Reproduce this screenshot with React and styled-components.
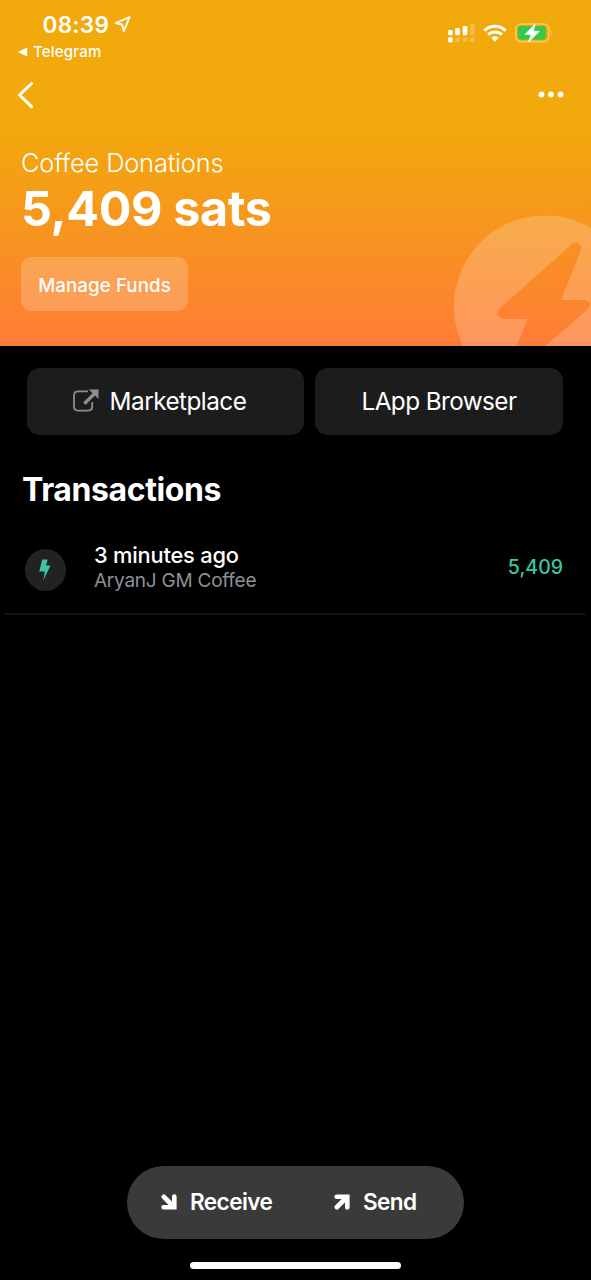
import React from "react";
import styled, { createGlobalStyle } from "styled-components";

const GlobalStyle = createGlobalStyle`
  * { box-sizing: border-box; }
  html, body { margin: 0; background: #000; }
  button { border: 0; padding: 0; margin: 0; background: none; color: inherit; font: inherit; letter-spacing: inherit; }
  h1, h2, p, ul { margin: 0; padding: 0; list-style: none; }
  svg { display: block; flex: none; }
`;

const Screen = styled.main`
  width: 591px;
  height: 1280px;
  display: flex;
  flex-direction: column;
  overflow: hidden;
  background: #000;
  color: #fff;
  font-family: Inter, "Liberation Sans", sans-serif;
`;

const Hero = styled.header`
  position: relative;
  flex: none;
  height: 346px;
  overflow: hidden;
  background: linear-gradient(180deg, #f2a90b 0, #f2a90b 120px, #f69a1b 205px, #fa8c27 270px, #ff7c38 346px);
`;

const Label = styled.span`
  display: block;
  white-space: nowrap;
  font-size: ${(p) => p.$size}px;
  line-height: ${(p) => p.$line}px;
  font-weight: ${(p) => p.$weight || 400};
  letter-spacing: ${(p) => p.$track || 0}px;
  color: ${(p) => p.$color || "inherit"};
`;

const StatusBar = styled.div`
  display: flex;
  justify-content: space-between;
  height: 68px;
  padding: 11px 38px 0 17px;
`;

const Clock = styled.div`
  display: flex;
  align-items: center;
  gap: 5px;
  padding-left: 25.5px;
  height: 27px;
`;

const BackToApp = styled.div`
  display: flex;
  align-items: center;
  gap: 5px;
  margin-top: 4px;
  height: 20px;
`;

const Indicators = styled.div`
  display: flex;
  align-items: center;
  gap: 8px;
  height: 24px;
  margin-top: 10px;
`;

const NavBar = styled.nav`
  display: flex;
  align-items: center;
  justify-content: space-between;
  height: 54px;
  padding: 0 27px 0 17px;
`;

const Balance = styled.section`
  padding: 26px 21px 0;
`;

const ManageButton = styled.button`
  display: flex;
  align-items: center;
  justify-content: center;
  width: 167px;
  height: 54px;
  margin-top: 18px;
  padding-top: 3px;
  border-radius: 11px;
  background: rgba(255, 255, 255, 0.2);
`;

const Watermark = styled.svg`
  position: absolute;
  left: 454px;
  top: 215px;
`;

const Actions = styled.div`
  display: grid;
  grid-template-columns: 277px 248px;
  gap: 11px;
  padding: 22px 0 0 27px;
`;

const ActionButton = styled.button`
  display: flex;
  align-items: center;
  justify-content: center;
  gap: 11px;
  height: 67px;
  padding-right: ${(p) => p.$inset || 0}px;
  padding-bottom: 1px;
  border-radius: 13px;
  background: #1c1c1c;
`;

const SectionTitle = styled.h2`
  padding: 35px 0 0 22px;
`;

const TransactionRow = styled.li`
  display: flex;
  align-items: flex-start;
  height: 87px;
  margin: 18px 5px 0;
  padding: 14px 23px 0 19.5px;
  border-bottom: 2px solid #111;
`;

const Badge = styled.div`
  display: flex;
  align-items: center;
  justify-content: center;
  width: 41px;
  height: 42px;
  margin: 7px 28.5px 0 0;
  border-radius: 50%;
  background: #222;
`;

const Details = styled.div`
  flex: 1;
  padding-top: 1px;
`;

const Amount = styled.div`
  padding-top: 13px;
`;

const Footer = styled.footer`
  display: flex;
  flex-direction: column;
  align-items: center;
  margin-top: auto;
  padding-bottom: 11px;
`;

const TransferPill = styled.div`
  display: flex;
  align-items: center;
  width: 337px;
  height: 73px;
  padding: 0 0 1px 34px;
  border-radius: 37px;
  background: #3a3a3b;
`;

const TransferButton = styled.button`
  display: flex;
  align-items: center;
  gap: 13px;
  width: ${(p) => p.$width}px;
`;

const HomeIndicator = styled.div`
  width: 211px;
  height: 7px;
  margin-top: 23px;
  border-radius: 4px;
  background: #fff;
`;

const LocationIcon = () => (
  <svg width="17" height="17" viewBox="0 0 17 17" fill="none" stroke="#fff" strokeWidth="1.8" strokeLinejoin="round">
    <path d="M15.6 1.2 1.6 7 8 8.5 9.8 15.2Z" />
  </svg>
);

const SignalIcon = () => (
  <svg width="27" height="20" viewBox="0 0 27 20" fill="#fff">
    <rect x="0" y="7" width="4.7" height="5.3" rx="1.2" />
    <rect x="7.2" y="5" width="4.7" height="7.3" rx="1.2" />
    <rect x="14.7" y="3" width="4.7" height="9.3" rx="1.2" />
    <rect x="22.1" y="0.5" width="4.5" height="11.8" rx="1.2" opacity="0.25" />
    <rect x="0" y="14.3" width="4.7" height="5.2" rx="1.4" />
    <g opacity="0.25">
      <rect x="7.2" y="14.5" width="4.7" height="4.6" rx="1.2" />
      <rect x="14.7" y="14.5" width="4.7" height="4.6" rx="1.2" />
      <rect x="22.1" y="14.5" width="4.5" height="4.6" rx="1.2" />
    </g>
  </svg>
);

const WifiIcon = () => (
  <svg width="24" height="18" viewBox="0 0 24 18">
    <g fill="none" stroke="#fff" strokeWidth="3">
      <path d="M1.3 6.7A15.3 15.3 0 0 1 22.7 6.7" />
      <path d="M5.1 10.7A9.9 9.9 0 0 1 18.9 10.7" />
    </g>
    <path d="M12 17.7 8.2 13.8A5.5 5.5 0 0 1 15.8 13.8Z" fill="#fff" />
  </svg>
);

const BatteryIcon = () => (
  <svg width="38" height="20" viewBox="0 0 38 20">
    <rect x="0.9" y="1" width="33" height="17.6" rx="5" fill="none" stroke="#f6cb60" strokeWidth="1.6" />
    <rect x="2.8" y="2.9" width="28" height="13.8" rx="3" fill="#35c94b" />
    <path d="M35.8 7.2C37.6 8 37.6 11.6 35.8 12.4Z" fill="#f6cb60" />
    <path d="M20.4 .8 10.2 11.3H16.3L13.6 19 24.2 8.3H18.1Z" fill="#fff" stroke="#fff" strokeWidth=".9" strokeLinejoin="round" />
  </svg>
);

const ExternalIcon = () => (
  <svg width="26" height="24" viewBox="0 0 26 24">
    <path d="M15 2.4H5Q1 2.4 1 6.4V17.6Q1 21.6 5 21.6H15Q19.2 21.6 19.2 17.6V13" fill="none" stroke="#8c8f91" strokeWidth="1.8" />
    <path d="M11.3 14.8 22 4.1" stroke="#8c8f91" strokeWidth="3.4" />
    <path d="M15.6 .4H25.5V10.1L22.2 6.8 18.8 3.5Z" fill="#8c8f91" />
  </svg>
);

const ArrowIcon = ({ down }) => (
  <svg width="16" height="16" viewBox="0 0 16 16" fill="none" stroke="#fff" strokeLinecap="round">
    <g transform={down ? "matrix(1 0 0 -1 0 16)" : undefined}>
      <path d="M2.6 2.7H13.3V13.4" strokeWidth="4.6" />
      <path d="M2.9 13.1 12 4" strokeWidth="4.8" />
    </g>
  </svg>
);

export default function App() {
  return (
    <>
      <GlobalStyle />
      <Screen>
        <Hero>
          <StatusBar>
            <div>
              <Clock>
                <Label $size={22.5} $line={27} $weight={600} $track={0.3}>08:39</Label>
                <LocationIcon />
              </Clock>
              <BackToApp>
                <svg width="11" height="10" viewBox="0 0 11 10"><path d="M.8 5 10.2.6V9.4Z" fill="#fff" /></svg>
                <Label $size={15} $line={20} $weight={500} $track={0.2}>Telegram</Label>
              </BackToApp>
            </div>
            <Indicators>
              <SignalIcon />
              <WifiIcon />
              <BatteryIcon />
            </Indicators>
          </StatusBar>
          <NavBar>
            <svg width="18" height="28" viewBox="0 0 18 28" fill="none" stroke="#fff" strokeWidth="3" strokeLinecap="round" strokeLinejoin="round">
              <path d="M14.6 2.5 2.5 14 14.6 25.6" />
            </svg>
            <svg width="26" height="8" viewBox="0 0 26 8" fill="#fff">
              <circle cx="3.5" cy="3.5" r="2.9" />
              <circle cx="13" cy="3.5" r="2.9" />
              <circle cx="22.6" cy="3.5" r="2.9" />
            </svg>
          </NavBar>
          <Balance>
            <Label as="p" $size={25.4} $line={30} $weight={300} $track={-0.16}>Coffee Donations</Label>
            <Label as="h1" $size={48.5} $line={61} $weight={700} $track={-0.4}>5,409 sats</Label>
            <ManageButton>
              <Label $size={18.7} $line={24} $weight={500} $track={0.1}>Manage Funds</Label>
            </ManageButton>
          </Balance>
          <Watermark width="137" height="131" viewBox="0 0 137 131">
            <path
              fill="#fff"
              fillOpacity="0.2"
              fillRule="evenodd"
              d="M91 .5A91 91 0 1 1 90.9 .5ZM118 29 46 93C41 98 44 104 51 104H74L54 150 60 158 133 95C139 89 135 85 129 85H107L127 35C128 28 122 26 118 29Z"
            />
          </Watermark>
        </Hero>

        <Actions>
          <ActionButton $inset={12}>
            <ExternalIcon />
            <Label $size={24.3} $line={30} $track={-0.52}>Marketplace</Label>
          </ActionButton>
          <ActionButton>
            <Label $size={24.3} $line={30} $track={-0.58}>LApp Browser</Label>
          </ActionButton>
        </Actions>

        <SectionTitle>
          <Label $size={32} $line={40} $weight={700} $track={-0.4}>Transactions</Label>
        </SectionTitle>
        <ul>
          <TransactionRow>
            <Badge>
              <svg width="12" height="22" viewBox="0 0 12 22" fill="#3dc5a3">
                <path d="M3.2 .4H8.6L7 6.4H11.5L4.4 21.3 5.8 12.4H.3Z" />
              </svg>
            </Badge>
            <Details>
              <Label as="p" $size={21.8} $line={25} $weight={500} $track={-0.18}>3 minutes ago</Label>
              <Label as="p" $size={19} $line={26} $color="#8c9197" $track={-0.24}>AryanJ GM Coffee</Label>
            </Details>
            <Amount>
              <Label $size={19.5} $line={24} $weight={500} $color="#3dc5a3">5,409</Label>
            </Amount>
          </TransactionRow>
        </ul>

        <Footer>
          <TransferPill>
            <TransferButton $width={173}>
              <ArrowIcon down />
              <Label $size={22.6} $line={28} $weight={600} $track={-0.6}>Receive</Label>
            </TransferButton>
            <TransferButton $width={90}>
              <ArrowIcon />
              <Label $size={22.6} $line={28} $weight={600} $track={-0.6}>Send</Label>
            </TransferButton>
          </TransferPill>
          <HomeIndicator />
        </Footer>
      </Screen>
    </>
  );
}
